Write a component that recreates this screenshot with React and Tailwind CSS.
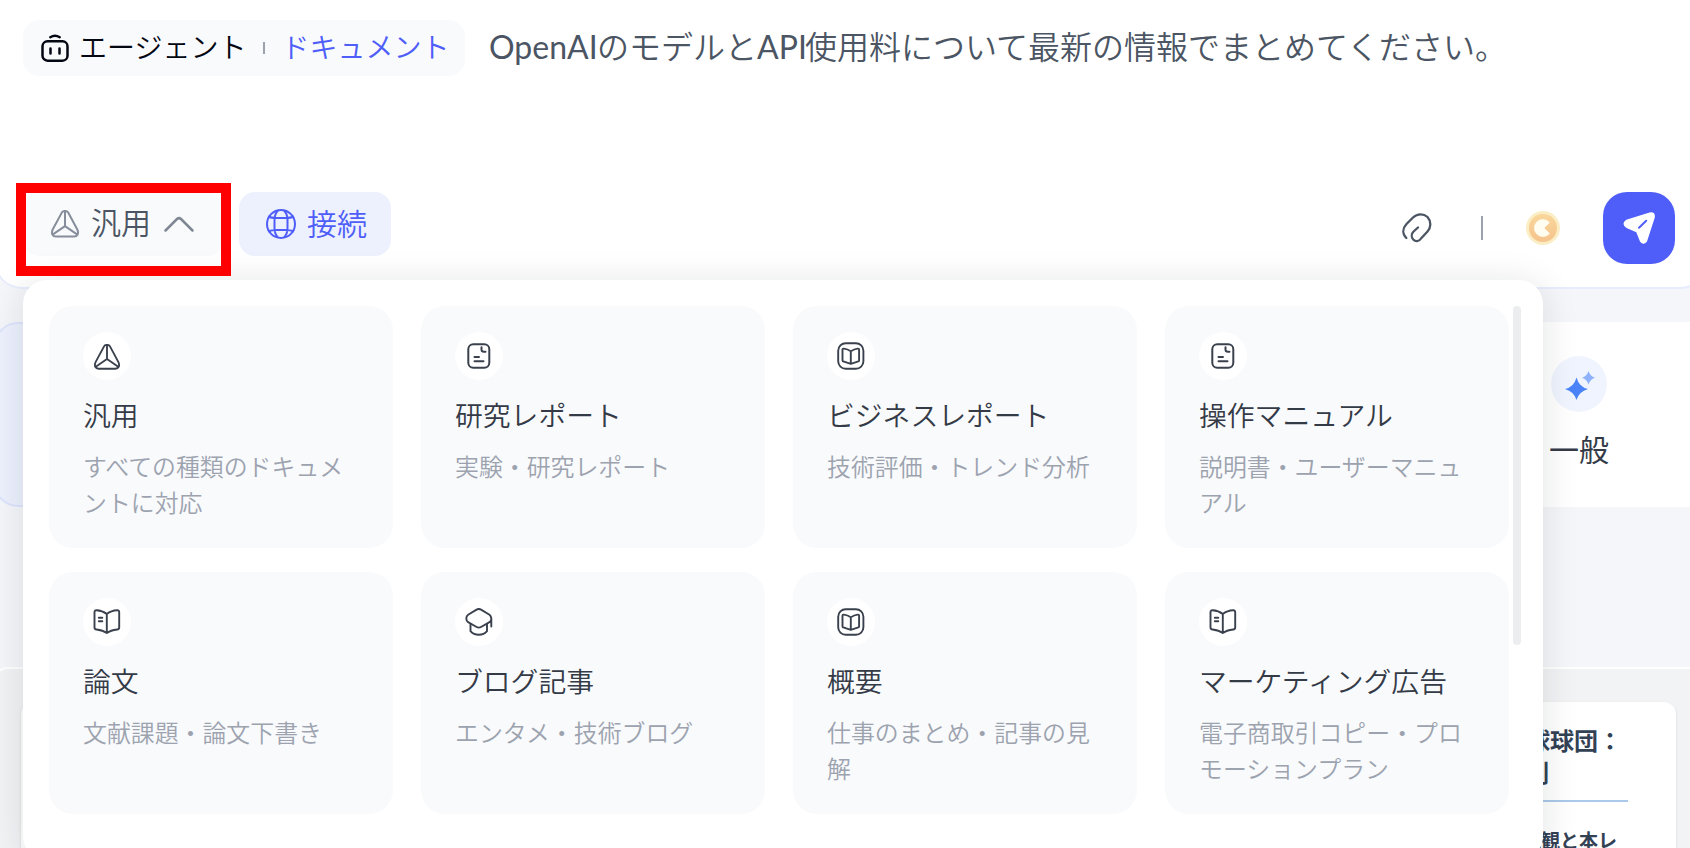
import { useState } from "react";

const TriangleIcon = ({ className }) => (
  <svg viewBox="0 0 28 28" className={className} fill="none" stroke="currentColor" strokeWidth="2" strokeLinecap="round" strokeLinejoin="round">
    <path d="M10.8 2.6C12 .4 16 .4 17.2 2.6L26.3 19.5C28 23.4 26.5 26.600 23 26.600H5C1.500 26.600 0 23.400 1.700 19.500Z" />
    <path d="M14 1V16.200M14 16.200L2.300 24.200M14 16.200L25.700 24.200" />
  </svg>
);

const NoteIcon = ({ className }) => (
  <svg viewBox="0 0 28 28" className={className} fill="none" stroke="currentColor" strokeWidth="2" strokeLinecap="round" strokeLinejoin="round">
    <rect x="3.300" y="2.300" width="21" height="23.500" rx="5" />
    <path d="M16.500 5.300V7.500Q16.500 9.800 19 9.800H20.500M9.500 15H14M9.500 19.300H18.500" />
  </svg>
);

const FramedBookIcon = ({ className }) => (
  <svg viewBox="0 0 28 28" className={className} fill="none" stroke="currentColor" strokeWidth="1.9" strokeLinecap="round" strokeLinejoin="round">
    <rect x="1.200" y="1.200" width="25.200" height="25.600" rx="7.500" />
    <path d="M13.800 9.200Q10.500 7 7 6.600Q5.500 6.500 5.500 7.500V18.500Q5.500 19.400 7 19.600L13.800 21.800L20.600 19.600Q22.100 19.400 22.100 18.500V7.500Q22.100 6.500 20.600 6.600Q17.300 7 13.800 9.200ZM13.800 9.200V21.800" />
  </svg>
);

const BookIcon = ({ className }) => (
  <svg viewBox="0 0 28 28" className={className} fill="none" stroke="currentColor" strokeWidth="1.9" strokeLinecap="round" strokeLinejoin="round">
    <path d="M13.800 6C11 3.800 7.500 2.500 3.500 2.300Q1.500 2.200 1.500 4.200V19.500Q1.500 21.300 3.500 21.500C7.500 22 11 23 13.800 25C16.600 23 20.200 22 24.200 21.500Q26.200 21.300 26.200 19.500V4.200Q26.200 2.200 24.200 2.300C20.200 2.500 16.600 3.800 13.800 6ZM13.800 6V25" />
    <path d="M5.800 9.700H9.300M5.800 13.300H9.300" />
  </svg>
);

const CapIcon = ({ className }) => (
  <svg viewBox="0 0 28 28" className={className} fill="none" stroke="currentColor" strokeWidth="1.9" strokeLinecap="round" strokeLinejoin="round">
    <path d="M11.600 1.600Q13.800 .3 16 1.600L24.500 6.700Q26.300 8 26.300 11Q26.300 13 24.500 14.200L16 19Q13.800 20.200 11.600 19L3.100 14.200Q1.300 13 1.300 10.500Q1.300 8 3.100 6.700ZM26.300 10V18.500" />
    <path d="M5.500 16V23.200Q8.500 26.800 13.800 26.800Q19 26.800 22 23.200V16" />
  </svg>
);

const RobotIcon = () => (
  <svg viewBox="0 0 28 28" className="size-7" fill="none" stroke="currentColor" strokeWidth="2.500" strokeLinecap="round">
    <rect x="1.500" y="7.300" width="25" height="19.400" rx="5" />
    <path d="M9.300 3.200Q14 .2 18.700 3.200M9.500 14.500V19.500M18.500 14.500V19.500" />
  </svg>
);

const GlobeIcon = () => (
  <svg viewBox="0 0 30 30" className="size-[30px]" fill="none" stroke="currentColor" strokeWidth="2">
    <circle cx="15" cy="15" r="14" />
    <path d="M12 1.500Q8.500 5 8.500 11V19Q8.500 25 12 28.500M18 1.500Q21.500 5 21.500 11V19Q21.500 25 18 28.500M2 7.500Q5 9 11 9H19Q25 9 28 7.500M2 22.500Q5 21 11 21H19Q25 21 28 22.500" />
  </svg>
);

const ClipIcon = () => (
  <svg viewBox="0 0 30 30" className="size-[30px]" fill="none" stroke="currentColor" strokeWidth="2.300" strokeLinecap="round" strokeLinejoin="round">
    <path d="M4.300 25C.3 21 .3 15.500 4.500 11L11 4.500C15.500 .3 21.500 .3 25.500 4C29.500 8.500 29 14.500 25.500 18.500L19 25.500C17 28.800 13.500 29 11.200 26.500C9 24 9.500 20.500 11.600 18.500L16 14.500" />
  </svg>
);

const CoinIcon = () => (
  <svg viewBox="0 0 34 34" className="size-[34px]">
    <defs>
      <linearGradient id="coin" x1="0" y1="0" x2="0" y2="1">
        <stop offset="0" stopColor="#f9d79b" />
        <stop offset="1" stopColor="#f6c38d" />
      </linearGradient>
    </defs>
    <circle cx="17" cy="17" r="17" fill="#fbedc4" />
    <circle cx="17" cy="17" r="14" fill="url(#coin)" />
    <path d="M23.500 11.500A8.600 8.600 0 1 0 23.500 22.500L18 17Z" fill="#fffdf0" stroke="#fffdf0" strokeWidth=".6" strokeLinejoin="round" />
  </svg>
);

const SendIcon = () => (
  <svg viewBox="0 0 32 32" className="size-8" fill="none">
    <path d="M3.300 7.800L26.500 .4Q32.500-.8 31.800 5.500L24 29.500Q20.500 34 17 29.500L13.300 20.300L3.500 16Q-2.500 11.800 3.300 7.800Z" fill="white" />
    <path d="M16 15.700L23.200 8.700" stroke="#4f5ef8" strokeWidth="2" strokeLinecap="round" />
  </svg>
);

const templates = [
  { title: "汎用", description: "すべての種類のドキュメントに対応", Icon: TriangleIcon, iconSize: "mt-px size-[26px]" },
  { title: "研究レポート", description: "実験・研究レポート", Icon: NoteIcon },
  { title: "ビジネスレポート", description: "技術評価・トレンド分析", Icon: FramedBookIcon },
  { title: "操作マニュアル", description: "説明書・ユーザーマニュアル", Icon: NoteIcon },
  { title: "論文", description: "文献課題・論文下書き", Icon: BookIcon },
  { title: "ブログ記事", description: "エンタメ・技術ブログ", Icon: CapIcon },
  { title: "概要", description: "仕事のまとめ・記事の見解", Icon: FramedBookIcon },
  { title: "マーケティング広告", description: "電子商取引コピー・プロモーションプラン", Icon: BookIcon },
];

const TemplateCard = ({ title, description, Icon, iconSize = "size-7" }) => (
  <button type="button" className="flex h-[242px] flex-col items-start rounded-3xl bg-[#f9fafc] pt-[26px] pr-[34px] pl-[34px] text-left">
    <span className="flex size-12 items-center justify-center rounded-full bg-white text-[#3a414d]">
      <Icon className={iconSize} />
    </span>
    <span className="mt-3.5 text-[27.8px] leading-10 whitespace-nowrap text-[#343b47]">{title}</span>
    <span className="mt-3.5 text-[23.9px] leading-9 break-all text-[#9ca3af]">{description}</span>
  </button>
);

const TemplateMenu = () => (
  <div className="absolute top-[280px] left-[23px] z-20 flex h-[580px] w-[1520px] rounded-3xl bg-white pt-[26px] pl-[26px] shadow-[0_4px_36px_rgba(20,24,34,0.12)]">
    <div className="grid h-[508px] w-[1460px] grid-cols-4 gap-x-7 gap-y-6">
      {templates.map((template) => (
        <TemplateCard key={template.title} {...template} />
      ))}
    </div>
    <div className="ml-1 h-[339px] w-2 rounded-full bg-[#ecedef]" />
  </div>
);

const Composer = ({ isOpen, onToggle }) => (
  <section className="-mr-[18px] -ml-1.5 h-[289px] rounded-b-[28px] border-2 border-t-0 border-[#e8edfd] bg-white pt-5 pr-[39px] pl-[27px]">
    <div className="flex items-center">
      <div className="flex h-14 w-[442px] shrink-0 items-center rounded-2xl bg-[#f9fafc] pl-[18px] text-[28px] text-[#030712]">
        <RobotIcon />
        <span className="-mt-1 ml-2.5 leading-10 whitespace-nowrap">エージェント</span>
        <span className="-mt-px ml-[17px] h-3 w-0.5 bg-[#9ca3af]" />
        <span className="-mt-1 ml-4 leading-10 whitespace-nowrap text-[#4f5ef8]">ドキュメント</span>
      </div>
      <p className="-mt-1 ml-6 text-[32px] leading-[48px] whitespace-nowrap text-[#4b5563]">
        <span className="inline-block w-[108px] font-['Lato'] text-[32px] font-normal">OpenAI</span>
        のモデルと
        <span className="inline-block w-12 font-['Lato'] text-[32px] font-normal">API</span>
        使用料について最新の情報でまとめてください。
      </p>
    </div>

    <div className="mt-[116px] flex items-center">
      <button type="button" onClick={onToggle} className="flex h-16 w-[200px] items-center rounded-2xl bg-[#f9fafc] pl-7 text-[30px] text-[#4b5563]">
        <TriangleIcon className="size-7 text-[#868e9b]" />
        <span className="-mt-1.5 ml-3 leading-10">汎用</span>
        <svg viewBox="0 0 30 16" className="ml-[13px] h-4 w-[30px]" fill="none" stroke="#7f8794" strokeWidth="2.500" strokeLinecap="round" strokeLinejoin="round">
          <path d="M1.500 14.500L13 3Q15 1.200 17 3L28.500 14.500" />
        </svg>
      </button>
      <button type="button" className="ml-4 flex h-16 w-[152px] items-center rounded-2xl bg-[#edf1fe] pl-[27px] text-[30px] text-[#4f5ef8]">
        <GlobeIcon />
        <span className="-mt-1 ml-[11px] leading-10">接続</span>
      </button>
      <div className="-mb-2 ml-auto flex items-center text-[#4b5563]">
        <ClipIcon />
        <span className="ml-[49px] h-6 w-0.5 bg-[#9ca3af]" />
        <span className="ml-[43px]">
          <CoinIcon />
        </span>
        <button type="button" className="-mr-2 ml-[43px] flex size-[72px] items-center justify-center rounded-3xl bg-[#4f5ef8]">
          <SendIcon />
        </button>
      </div>
    </div>
    {isOpen ? <TemplateMenu /> : null}
  </section>
);

const App = () => {
  const [isOpen, setIsOpen] = useState(true);

  return (
    <main className="relative h-[848px] w-[1690px] overflow-hidden bg-[#f5f6f9] font-['Noto_Sans_CJK_JP',sans-serif] font-[350]">
      <Composer isOpen={isOpen} onToggle={() => setIsOpen(!isOpen)} />
      <div className="pointer-events-none absolute top-[183px] left-4 z-30 h-[93px] w-[215px] border-[10px] border-[#ff0000]" />

      <div className="mt-[33px] -ml-1.5 flex h-[185px] justify-between">
        <div className="w-[400px] rounded-3xl border-2 border-[#dde5fd] bg-[#edf1fe]" />
        <div className="flex w-[220px] flex-col items-center bg-white pt-[34px] pr-0.5">
          <span className="flex size-14 items-center justify-center rounded-full bg-[#eff4fe]">
            <svg viewBox="-2 -2 32 32" className="size-8">
              <path d="M11.500 7.500Q14 17 23 19Q14 21.500 11.500 30Q9 21.500 0 19Q9 17 11.500 7.500Z" fill="#4a83f8" />
              <path d="M23.500 1Q25 6.300 30 7.700Q25 9.200 23.500 14.500Q22 9.200 17 7.700Q22 6.300 23.500 1Z" fill="#8eb1fb" />
            </svg>
          </span>
          <span className="mt-4 text-[30px] leading-10 font-normal text-[#343b47]">一般</span>
        </div>
      </div>

      <section className="mt-40 -mr-6 -ml-2 h-[220px] rounded-tl-2xl border-t-2 border-l-2 border-white bg-[#f2f3f5] pt-[33px]">
        <div className="flex justify-between pr-[38px] pl-[27px]">
          <div className="h-[180px] w-[700px] rounded-xl bg-white shadow-sm" />
          <div className="h-[180px] w-[400px] rounded-xl bg-white pt-[22px] pr-12 text-right font-bold text-[#334155] shadow-sm">
            <p className="pr-1.5 text-[24px] leading-8 whitespace-nowrap">野球球団：</p>
            <p className="pr-[79px] text-[24px] leading-8">役割</p>
            <div className="mt-3 h-0.5 bg-[#abc9ea]" />
            <p className="mt-6 pr-[11px] text-[19px] leading-7">概観と本レ</p>
          </div>
        </div>
      </section>
    </main>
  );
};

export default App;
